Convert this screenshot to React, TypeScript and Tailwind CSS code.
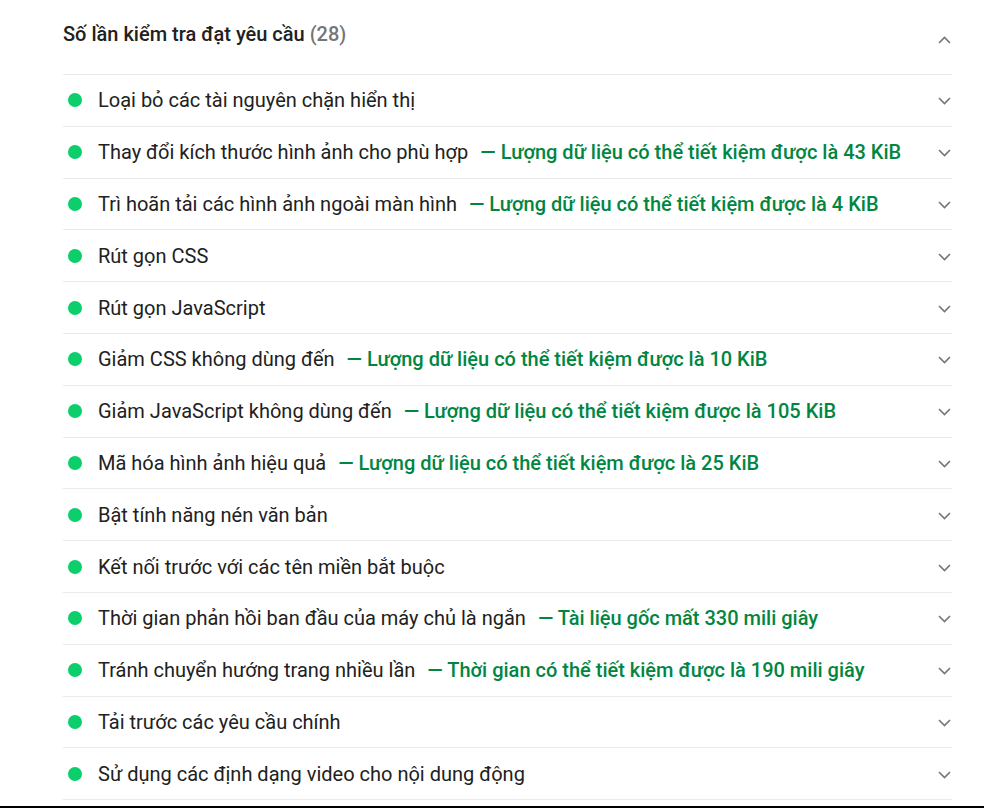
const audits: { title: string; detail?: string }[] = [
  { title: "Loại bỏ các tài nguyên chặn hiển thị" },
  { title: "Thay đổi kích thước hình ảnh cho phù hợp", detail: "Lượng dữ liệu có thể tiết kiệm được là 43 KiB" },
  { title: "Trì hoãn tải các hình ảnh ngoài màn hình", detail: "Lượng dữ liệu có thể tiết kiệm được là 4 KiB" },
  { title: "Rút gọn CSS" },
  { title: "Rút gọn JavaScript" },
  { title: "Giảm CSS không dùng đến", detail: "Lượng dữ liệu có thể tiết kiệm được là 10 KiB" },
  { title: "Giảm JavaScript không dùng đến", detail: "Lượng dữ liệu có thể tiết kiệm được là 105 KiB" },
  { title: "Mã hóa hình ảnh hiệu quả", detail: "Lượng dữ liệu có thể tiết kiệm được là 25 KiB" },
  { title: "Bật tính năng nén văn bản" },
  { title: "Kết nối trước với các tên miền bắt buộc" },
  { title: "Thời gian phản hồi ban đầu của máy chủ là ngắn", detail: "Tài liệu gốc mất 330 mili giây" },
  { title: "Tránh chuyển hướng trang nhiều lần", detail: "Thời gian có thể tiết kiệm được là 190 mili giây" },
  { title: "Tải trước các yêu cầu chính" },
  { title: "Sử dụng các định dạng video cho nội dung động" },
];

const Chevron = ({ up = false }: { up?: boolean }) => (
  <svg width="13" height="8" viewBox="0 0 13 8" fill="none">
    <path
      d={up ? "M1 7L6.5 1.5L12 7" : "M1 1L6.5 6.5L12 1"}
      stroke="#757575"
      strokeWidth="1.6"
    />
  </svg>
);

export default function App() {
  return (
    <div
      className="h-[808px] w-[984px] overflow-hidden bg-white border-b-2 border-black box-border"
      style={{ fontFamily: "Roboto, 'Noto Sans', sans-serif" }}
    >
      <div className="ml-[63px] w-[889px]">
        {/* group header */}
        <div className="h-[74px] flex items-start justify-between">
          <div className="mt-[21px] text-[20px] leading-[26px] font-medium text-[#212121]">
            Số lần kiểm tra đạt yêu cầu <span className="text-[#757575]">(28)</span>
          </div>
          <div className="mt-[36px] mr-[1px]">
            <Chevron up />
          </div>
        </div>

        {audits.map((a) => (
          <div
            key={a.title}
            className="h-[51.8px] border-t border-[#ebebeb] flex items-center justify-between"
          >
            <div className="flex items-center text-[20px] leading-[26px]">
              <span className="ml-[5px] w-[14px] h-[14px] rounded-full bg-[#0cce6b]" />
              <span className="ml-[16px] text-[#212121]">{a.title}</span>
              {a.detail && (
                <span className="ml-[12px] text-[#018642] font-medium">— {a.detail}</span>
              )}
            </div>
            <div className="mr-[1px] mt-[2px]">
              <Chevron />
            </div>
          </div>
        ))}
        <div className="border-t border-[#ebebeb]" />
      </div>
    </div>
  );
}
